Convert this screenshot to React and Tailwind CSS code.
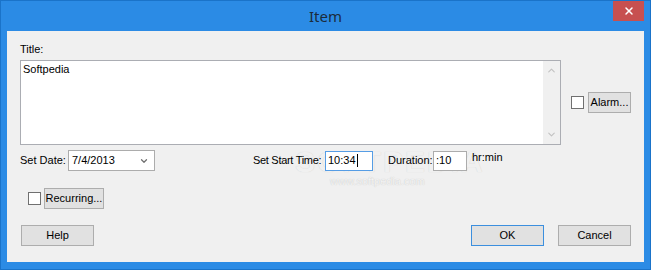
import { X, ChevronDown, ChevronUp } from "lucide-react";

const font = { fontFamily: '"Liberation Sans", Arial, sans-serif' };

const Checkbox = () => (
  <div className="h-[13px] w-[13px] shrink-0 border border-[#707070] bg-white" />
);

const Button = ({ children, className = "", primary = false }) => (
  <button
    type="button"
    className={
      "flex h-[21px] items-center justify-center whitespace-nowrap border bg-[#e1e1e1] text-[11px] leading-none text-black " +
      (primary ? "border-[#3c8fde] " : "border-[#adadad] ") +
      className
    }
  >
    {children}
  </button>
);

const ItemDialog = () => {
  return (
    <div
      className="relative flex h-[270px] w-[651px] flex-col overflow-hidden border border-[#1a73c9] bg-[#2b8be5]"
      style={font}
    >
      {/* title bar */}
      <div className="relative flex h-[30px] shrink-0 items-center justify-center">
        <span
          className="text-[15px] text-[#1b2b3c]"
          style={{ fontFamily: '"Noto Sans", "Open Sans", sans-serif' }}
        >
          Item
        </span>
        <div className="absolute right-[6px] top-[-1px] flex h-[21px] w-[31px] items-center justify-center bg-[#c75050]">
          <X size={12} strokeWidth={3} color="#ffffff" />
        </div>
      </div>

      {/* client area */}
      <div className="relative mx-[6px] flex h-[231px] shrink-0 flex-col bg-[#f0f0f0] pl-[13px] pt-[12px] text-[11px] text-black">
        {/* watermark, painted under the controls */}
        <div className="pointer-events-none absolute left-[288px] top-[116px] text-[30px] font-bold leading-none tracking-[2px] text-[#f0f0f0] [text-shadow:0_0_1px_#d0d0d0]">
          SOFTPEDIA
        </div>
        <div className="pointer-events-none absolute left-[323px] top-[145px] text-[11px] leading-none text-[#f4f4f4] [text-shadow:0_0_1px_#bdbdbd]">
          www.softpedia.com
        </div>

        <div className="relative h-[13px] leading-[13px]">Title:</div>

        <div className="relative mt-[4px] flex items-center">
          <div className="flex h-[85px] w-[541px] border border-[#abadb3] bg-white">
            <div className="flex-1 pl-[2px] pt-[1px] leading-[14px]">Softpedia</div>
            <div className="flex w-[17px] flex-col items-center justify-between bg-[#f0f0f0] py-[4px]">
              <ChevronUp size={11} strokeWidth={2.5} color="#c2c2c2" />
              <ChevronDown size={11} strokeWidth={2.5} color="#c2c2c2" />
            </div>
          </div>
          <div className="ml-[10px] flex items-center gap-[4px]">
            <Checkbox />
            <Button className="w-[43px]">Alarm...</Button>
          </div>
        </div>

        <div className="relative mt-[5px] flex h-[21px] items-center whitespace-nowrap">
          <span className="w-[48px]">Set Date:</span>
          <div className="flex h-[21px] w-[87px] items-center justify-between border border-[#acacac] bg-white pl-[3px] pr-[5px]">
            <span>7/4/2013</span>
            <ChevronDown size={10} strokeWidth={3} color="#707070" />
          </div>
          <span className="ml-[98px] w-[72px] tracking-[-0.3px]">Set Start Time:</span>
          <div className="flex h-[20px] w-[48px] items-center border border-[#569de5] bg-white pl-[2px]">
            <span>10:34</span>
            <span className="ml-[1px] h-[13px] w-[1px] bg-black" />
          </div>
          <span className="ml-[15px] w-[45px]">Duration:</span>
          <div className="flex h-[20px] w-[34px] items-center border border-[#acacac] bg-white pl-[2px]">
            :10
          </div>
          <span className="ml-[5px] -mt-[6px]">hr:min</span>
        </div>

        <div className="relative ml-[8px] mt-[17px] flex items-center gap-[3px]">
          <Checkbox />
          <Button className="w-[60px]">Recurring...</Button>
        </div>

        <div className="relative mt-[16px] flex items-center">
          <Button className="ml-[1px] w-[73px]">Help</Button>
          <Button primary className="ml-[377px] w-[73px]">
            OK
          </Button>
          <Button className="ml-[14px] w-[73px]">Cancel</Button>
        </div>
      </div>
    </div>
  );
};

export default function App() {
  return <ItemDialog />;
}
